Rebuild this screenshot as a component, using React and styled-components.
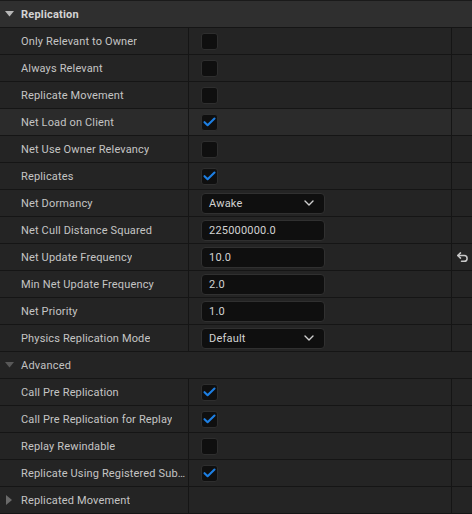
import React from "react";
import styled, { createGlobalStyle } from "styled-components";

const Global = createGlobalStyle`
  html, body { margin: 0; padding: 0; background: #1a1a1a; }
  body { font-family: Roboto, "Noto Sans", "DejaVu Sans", sans-serif; }
`;

const Panel = styled.div`
  width: 472px;
  height: 514px;
  overflow: hidden;
  background: #151515;
  display: flex;
  flex-direction: column;
  gap: 1px;
  box-sizing: border-box;
`;

const CategoryRow = styled.div`
  height: ${(p) => (p.$sub ? 26 : 27)}px;
  flex: none;
  display: flex;
  align-items: center;
  box-sizing: border-box;
  border-top: ${(p) => (p.$sub ? "none" : "1px solid #1a1a1a")};
  background: ${(p) => (p.$sub ? "#242424" : "#2f2f2f")};
  color: ${(p) => (p.$sub ? "#c2c2c2" : "#d4d4d4")};
  font-size: 11px;
  font-weight: ${(p) => (p.$sub ? 400 : 700)};
  letter-spacing: 0.2px;
`;

const Arrow = styled.span`
  width: 21px;
  height: 26px;
  flex: none;
  display: flex;
  align-items: center;
  justify-content: center;
  padding-right: 3px;
  box-sizing: border-box;
`;

const Row = styled.div`
  height: 26px;
  flex: none;
  display: grid;
  grid-template-columns: 188px 262px 1fr;
  column-gap: 1px;
`;

const NameCell = styled.div`
  background: ${(p) => (p.$hover ? "#2b2b2b" : "#242424")};
  display: flex;
  align-items: center;
  padding-left: 21px;
  padding-right: 0;
  color: #c4c4c4;
  font-size: 11px;
  letter-spacing: 0.15px;
  white-space: nowrap;
  overflow: hidden;
  box-sizing: border-box;
`;

const NameText = styled.span`
  overflow: hidden;
  text-overflow: ellipsis;
  white-space: nowrap;
`;

const ValueCell = styled.div`
  background: ${(p) => (p.$hover ? "#2b2b2b" : "#242424")};
  display: flex;
  align-items: center;
  padding-left: 12px;
`;

const ResetCell = styled.div`
  background: ${(p) => (p.$hover ? "#2b2b2b" : "#242424")};
  display: flex;
  align-items: center;
  justify-content: center;
  padding-left: 1px;
`;

const Box = styled.div`
  width: 17px;
  height: 17px;
  box-sizing: border-box;
  border-radius: 3px;
  background: #0f0f0f;
  border: 1px solid #2e2e2e;
  display: flex;
  align-items: center;
  justify-content: center;
`;

const Field = styled.div`
  width: 124px;
  height: 21px;
  box-sizing: border-box;
  border-radius: 4px;
  background: #0f0f0f;
  border: 1px solid #303030;
  display: flex;
  align-items: center;
  justify-content: space-between;
  padding: 0 10px 0 7px;
  color: #d2d2d2;
  font-size: 11px;
  letter-spacing: 0.2px;
`;

const DownTri = ({ color }) => (
  <svg width="9" height="6" viewBox="0 0 9 6">
    <path d="M0 0 L9 0 L4.5 5.5 Z" fill={color} />
  </svg>
);

const RightTri = ({ color }) => (
  <svg width="6" height="10" viewBox="0 0 6 10">
    <path d="M0 0 L6 5 L0 10 Z" fill={color} />
  </svg>
);

const Check = () => (
  <svg width="13" height="10" viewBox="0 0 13 10">
    <path d="M1.5 5.2 L4.6 8.2 L11.5 1.5" fill="none" stroke="#1d7fe3" strokeWidth="2.1" strokeLinecap="round" strokeLinejoin="round" />
  </svg>
);

const Chevron = () => (
  <svg width="10" height="6" viewBox="0 0 10 6">
    <path d="M1 1 L5 5 L9 1" fill="none" stroke="#cfcfcf" strokeWidth="1.4" strokeLinecap="round" strokeLinejoin="round" />
  </svg>
);

const ResetIcon = () => (
  <svg width="13" height="11" viewBox="0 0 13 11">
    <path d="M1.8 3.5 H8.2 A2.9 2.9 0 0 1 8.2 9.3 H5.5" fill="none" stroke="#c8c8c8" strokeWidth="1.5" strokeLinecap="round" />
    <path d="M4.5 0.9 L1.8 3.5 L4.5 6.1" fill="none" stroke="#c8c8c8" strokeWidth="1.5" strokeLinecap="round" strokeLinejoin="round" />
  </svg>
);

const Checkbox = ({ checked }) => <Box>{checked && <Check />}</Box>;

const Value = ({ p }) => {
  if (p.type === "check") return <Checkbox checked={p.value} />;
  if (p.type === "combo")
    return (
      <Field>
        <span>{p.value}</span>
        <Chevron />
      </Field>
    );
  return (
    <Field>
      <span>{p.value}</span>
    </Field>
  );
};

const Property = ({ p }) => (
  <Row>
    <NameCell $hover={p.hover}>
      <NameText>{p.name}</NameText>
    </NameCell>
    <ValueCell $hover={p.hover}>{p.type && <Value p={p} />}</ValueCell>
    <ResetCell $hover={p.hover}>{p.reset && <ResetIcon />}</ResetCell>
  </Row>
);

const main = [
  { name: "Only Relevant to Owner", type: "check", value: false },
  { name: "Always Relevant", type: "check", value: false },
  { name: "Replicate Movement", type: "check", value: false },
  { name: "Net Load on Client", type: "check", value: true, hover: true },
  { name: "Net Use Owner Relevancy", type: "check", value: false },
  { name: "Replicates", type: "check", value: true },
  { name: "Net Dormancy", type: "combo", value: "Awake" },
  { name: "Net Cull Distance Squared", type: "text", value: "225000000.0" },
  { name: "Net Update Frequency", type: "text", value: "10.0", reset: true },
  { name: "Min Net Update Frequency", type: "text", value: "2.0" },
  { name: "Net Priority", type: "text", value: "1.0" },
  { name: "Physics Replication Mode", type: "combo", value: "Default" },
];

const advanced = [
  { name: "Call Pre Replication", type: "check", value: true },
  { name: "Call Pre Replication for Replay", type: "check", value: true },
  { name: "Replay Rewindable", type: "check", value: false },
  { name: "Replicate Using Registered SubObjectList", type: "check", value: true },
];

const SubName = styled(NameCell)`
  padding-left: 0;
`;

export default function App() {
  return (
    <>
      <Global />
      <Panel>
        <CategoryRow>
          <Arrow>
            <DownTri color="#b8b8b8" />
          </Arrow>
          Replication
        </CategoryRow>
        {main.map((p) => (
          <Property key={p.name} p={p} />
        ))}
        <CategoryRow $sub>
          <Arrow>
            <DownTri color="#585858" />
          </Arrow>
          Advanced
        </CategoryRow>
        {advanced.map((p) => (
          <Property key={p.name} p={p} />
        ))}
        <Row>
          <SubName>
            <Arrow>
              <RightTri color="#6a6a6a" />
            </Arrow>
            <NameText>Replicated Movement</NameText>
          </SubName>
          <ValueCell />
          <ResetCell />
        </Row>
      </Panel>
    </>
  );
}
